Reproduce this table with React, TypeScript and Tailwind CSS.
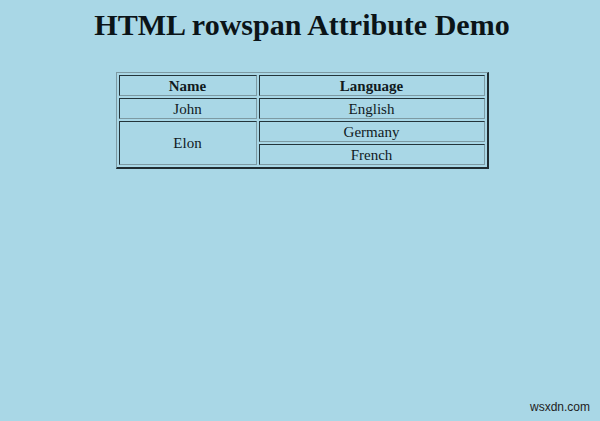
import React from 'react';

const rows = [
  { name: 'John', langs: ['English'] },
  { name: 'Elon', langs: ['Germany', 'French'] },
];

const cell =
  "border border-t-[#23343a] border-l-[#23343a] border-b-[#7d9aa3] border-r-[#7d9aa3] p-0 h-[21px] text-[15px] leading-[18px] text-center align-middle";

export default function App() {
  return (
    <div className="relative h-[421px] w-[600px] bg-[#a9d7e6] text-[#111a1e] font-['Liberation_Serif','Times_New_Roman',serif] overflow-hidden">
      <h1 className="pt-[7px] text-center text-[30px] leading-[36px] font-bold pl-[4px] text-[#0b1418]">
        HTML rowspan Attribute Demo
      </h1>

      <div className="flex justify-center pl-[4px] mt-[29px]">
        <table className="border-separate border-spacing-[2px] border-t border-l border-b-2 border-r-2 border-t-[#7d9aa3] border-l-[#7d9aa3] border-b-[#1f2c31] border-r-[#1f2c31]">
          <thead>
            <tr>
              <th className={`${cell} w-[138px] font-bold`}>Name</th>
              <th className={`${cell} w-[226px] font-bold`}>Language</th>
            </tr>
          </thead>
          <tbody>
            {rows.map((r) =>
              r.langs.map((lang, i) => (
                <tr key={r.name + lang}>
                  {i === 0 && (
                    <td rowSpan={r.langs.length} className={cell}>
                      {r.name}
                    </td>
                  )}
                  <td className={cell}>{lang}</td>
                </tr>
              ))
            )}
          </tbody>
        </table>
      </div>

      <div className="absolute right-[10px] bottom-[5px] text-[12px] text-[#222] font-['Liberation_Sans',Arial,sans-serif]">
        wsxdn.com
      </div>
    </div>
  );
}
